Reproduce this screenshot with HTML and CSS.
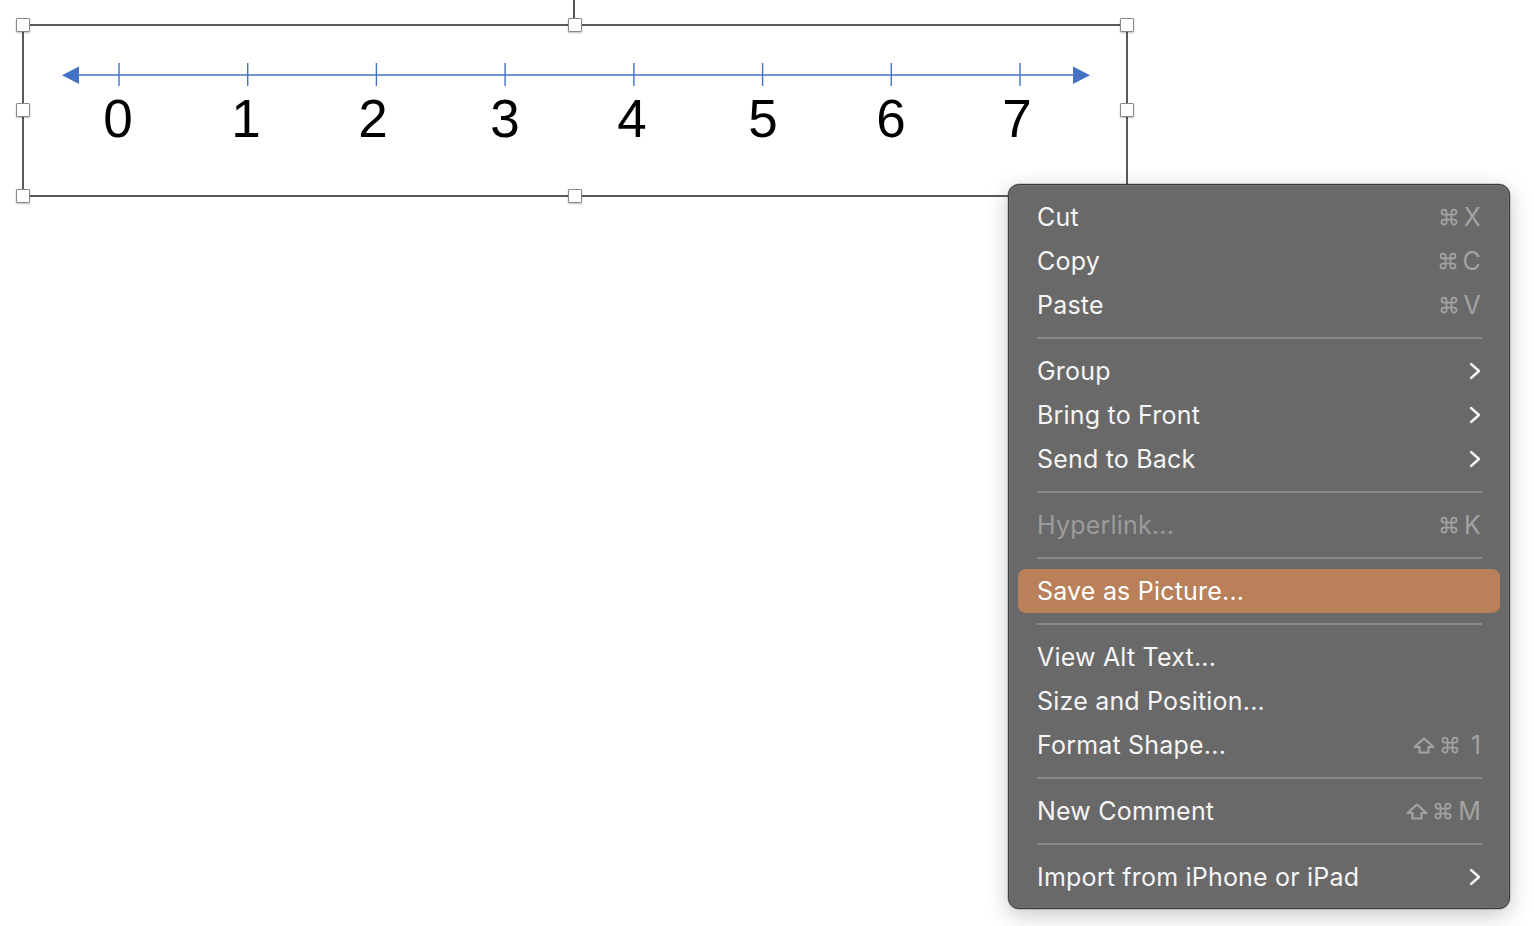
FILE: index.html
```html
<!DOCTYPE html>
<html>
<head>
<meta charset="utf-8">
<link rel="stylesheet" href="styles.css">
</head>
<body>
<div class="stage">
  <div class="stem"></div>
  <div class="shape">
    <svg class="numberline" width="1102" height="169" viewBox="24 26 1102 169">
      <line x1="76" y1="75" x2="1076" y2="75" stroke="#4472C4" stroke-width="1.4"/>
      <polygon points="62,75.3 79,66.5 79,84" fill="#4472C4"/>
      <polygon points="1090,75.3 1073,66.5 1073,84" fill="#4472C4"/>
      <g stroke="#4472C4" stroke-width="1.4">
        <line x1="119" y1="63" x2="119" y2="86"/>
        <line x1="247.7" y1="63" x2="247.7" y2="86"/>
        <line x1="376.4" y1="63" x2="376.4" y2="86"/>
        <line x1="505.1" y1="63" x2="505.1" y2="86"/>
        <line x1="633.9" y1="63" x2="633.9" y2="86"/>
        <line x1="762.6" y1="63" x2="762.6" y2="86"/>
        <line x1="891.3" y1="63" x2="891.3" y2="86"/>
        <line x1="1020" y1="63" x2="1020" y2="86"/>
      </g>
      <g class="digits" text-anchor="middle">
        <text x="118" y="137">0</text>
        <text x="246" y="137">1</text>
        <text x="373" y="137">2</text>
        <text x="505" y="137">3</text>
        <text x="632" y="137">4</text>
        <text x="763" y="137">5</text>
        <text x="891" y="137">6</text>
        <text x="1017" y="137">7</text>
      </g>
    </svg>
    <span class="handle h-tl"></span>
    <span class="handle h-tm"></span>
    <span class="handle h-tr"></span>
    <span class="handle h-ml"></span>
    <span class="handle h-mr"></span>
    <span class="handle h-bl"></span>
    <span class="handle h-bm"></span>
  </div>
</div>

<div class="menu">
  <div class="item"><span class="label">Cut</span><span class="key"><svg class="cmd" width="20" height="20" viewBox="0 0 24 24"><path d="M15 6v12a3 3 0 1 0 3-3H6a3 3 0 1 0 3 3V6a3 3 0 1 0-3 3h12a3 3 0 1 0-3-3"/></svg>X</span></div>
  <div class="item"><span class="label">Copy</span><span class="key"><svg class="cmd" width="20" height="20" viewBox="0 0 24 24"><path d="M15 6v12a3 3 0 1 0 3-3H6a3 3 0 1 0 3 3V6a3 3 0 1 0-3 3h12a3 3 0 1 0-3-3"/></svg>C</span></div>
  <div class="item"><span class="label">Paste</span><span class="key"><svg class="cmd" width="20" height="20" viewBox="0 0 24 24"><path d="M15 6v12a3 3 0 1 0 3-3H6a3 3 0 1 0 3 3V6a3 3 0 1 0-3 3h12a3 3 0 1 0-3-3"/></svg>V</span></div>
  <div class="sep"></div>
  <div class="item"><span class="label">Group</span><svg class="chev" width="12" height="18" viewBox="0 0 12 18"><polyline points="2,2 10,9 2,16"/></svg></div>
  <div class="item"><span class="label">Bring to Front</span><svg class="chev" width="12" height="18" viewBox="0 0 12 18"><polyline points="2,2 10,9 2,16"/></svg></div>
  <div class="item"><span class="label">Send to Back</span><svg class="chev" width="12" height="18" viewBox="0 0 12 18"><polyline points="2,2 10,9 2,16"/></svg></div>
  <div class="sep"></div>
  <div class="item disabled"><span class="label">Hyperlink...</span><span class="key"><svg class="cmd" width="20" height="20" viewBox="0 0 24 24"><path d="M15 6v12a3 3 0 1 0 3-3H6a3 3 0 1 0 3 3V6a3 3 0 1 0-3 3h12a3 3 0 1 0-3-3"/></svg>K</span></div>
  <div class="sep"></div>
  <div class="item active"><span class="label">Save as Picture...</span></div>
  <div class="sep"></div>
  <div class="item"><span class="label">View Alt Text...</span></div>
  <div class="item"><span class="label">Size and Position...</span></div>
  <div class="item"><span class="label">Format Shape...</span><span class="key"><svg class="shift" width="22" height="17" viewBox="0 0 22 17"><polygon points="11,1.5 20.5,10 15.5,10 15.5,15.5 6.5,15.5 6.5,10 1.5,10"/></svg><svg class="cmd" width="20" height="20" viewBox="0 0 24 24"><path d="M15 6v12a3 3 0 1 0 3-3H6a3 3 0 1 0 3 3V6a3 3 0 1 0-3 3h12a3 3 0 1 0-3-3"/></svg><span class="one">1</span></span></div>
  <div class="sep"></div>
  <div class="item"><span class="label">New Comment</span><span class="key"><svg class="shift" width="22" height="17" viewBox="0 0 22 17"><polygon points="11,1.5 20.5,10 15.5,10 15.5,15.5 6.5,15.5 6.5,10 1.5,10"/></svg><svg class="cmd" width="20" height="20" viewBox="0 0 24 24"><path d="M15 6v12a3 3 0 1 0 3-3H6a3 3 0 1 0 3 3V6a3 3 0 1 0-3 3h12a3 3 0 1 0-3-3"/></svg>M</span></div>
  <div class="sep"></div>
  <div class="item"><span class="label">Import from iPhone or iPad</span><svg class="chev" width="12" height="18" viewBox="0 0 12 18"><polyline points="2,2 10,9 2,16"/></svg></div>
</div>
</body>
</html>
```

FILE: styles.css
```css
html, body {
  margin: 0;
  padding: 0;
  background: #ffffff;
}

body {
  width: 1534px;
  height: 926px;
  overflow: hidden;
  position: relative;
  font-family: Inter, "Liberation Sans", sans-serif;
}

.stage {
  padding: 24px 0 0 22px;
  position: relative;
}

.stem {
  position: absolute;
  left: 573px;
  top: 0;
  width: 2px;
  height: 20px;
  background: #555555;
}

.shape {
  position: relative;
  width: 1102px;
  height: 169px;
  border: 2px solid #5a5a5a;
}

.numberline {
  display: block;
}

.digits text {
  font-family: "Liberation Sans", Arial, sans-serif;
  font-size: 53px;
  fill: #000000;
}

.handle {
  position: absolute;
  width: 14px;
  height: 14px;
  background: #ffffff;
  border: 1px solid #888888;
  border-radius: 1px;
  box-shadow: 0 1px 2px rgba(0, 0, 0, 0.25);
  box-sizing: border-box;
}

.h-tl { left: -8px; top: -8px; }
.h-tm { left: 544px; top: -8px; }
.h-tr { left: 1096px; top: -8px; }
.h-ml { left: -8px; top: 77px; }
.h-mr { left: 1096px; top: 77px; }
.h-bl { left: -8px; top: 163px; }
.h-bm { left: 544px; top: 163px; }

.menu {
  position: absolute;
  left: 1008px;
  top: 184px;
  width: 500px;
  box-sizing: content-box;
  padding: 10px 0 9px 0;
  background: #696969;
  border: 1px solid #3a3a3a;
  border-radius: 11px;
  box-shadow: 0 0 0 0.5px rgba(0, 0, 0, 0.3), 0 6px 22px rgba(0, 0, 0, 0.22), inset 0 0 0 1px rgba(255, 255, 255, 0.08);
}

.item {
  display: flex;
  align-items: center;
  justify-content: space-between;
  height: 44px;
  margin: 0 9px;
  padding: 0 19px 0 19px;
  border-radius: 8px;
  color: #f5f5f5;
  font-size: 25px;
  letter-spacing: 0.2px;
}

.item .label {
  line-height: 44px;
}

.item.disabled {
  color: #9b9b9b;
}

.item.active {
  background: #b98059;
  color: #ffffff;
}

.key {
  color: #a3a3a3;
  font-size: 25px;
  display: flex;
  align-items: center;
}

.cmd {
  display: block;
  margin-right: 5px;
  fill: none;
  stroke: #a3a3a3;
  stroke-width: 2.1;
  stroke-linecap: round;
  stroke-linejoin: round;
}

.shift {
  display: block;
  margin-right: 5px;
  fill: none;
  stroke: #a3a3a3;
  stroke-width: 2.2;
  stroke-linejoin: round;
}

.one {
  margin-left: 6px;
}

.chev {
  display: block;
  fill: none;
  stroke: #f4f4f4;
  stroke-width: 2.4;
  stroke-linecap: round;
  stroke-linejoin: round;
}

.sep {
  height: 2px;
  margin: 10px 27px 10px 28px;
  background: #8a8a8a;
}
```
